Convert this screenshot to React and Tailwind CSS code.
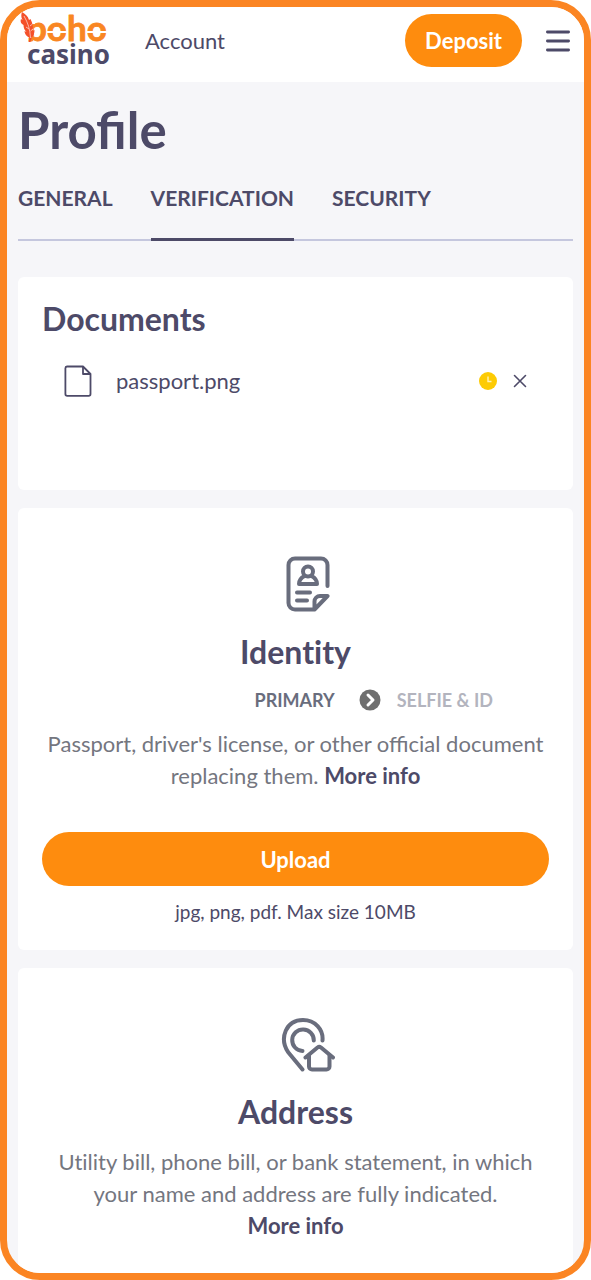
import React from 'react';

const Logo = () => (
  <svg viewBox="0 0 92 58" className="w-[92px] h-[58px] overflow-visible" role="img" aria-label="boho casino">
    <text x="6" y="29" fontSize="35" fontWeight="700" fill="#f98622" stroke="#f98622" strokeWidth="0.8" strokeLinejoin="round" fontFamily="Lato, sans-serif">boho</text>
    {/* slits at both sides of the round letters */}
    <g fill="#fff">
      <rect x="2" y="0" width="12" height="12" />
      <rect x="2" y="10" width="9" height="16" />
      <rect x="26" y="19" width="20" height="2" />
      <rect x="66" y="19" width="20" height="2" />
    </g>
    <path d="M1 0c3 2 6 4 7 8l1.500-1c2 4 3 8 2 12l2-1c0 3-1 6-3 8l-1 4h-2l1-4c-3-2-5-4-5-7l2 1c-2-2-3-4-3-7l2 1C0 12-1 10 0 7l1.500 1C0 5 0 3 1 0z" fill="#f4502a" />
    <path d="M3 4c4 7 6 13 6.500 22M9 14l2.500-2M9.500 19l2.500-2M8 17l-3-2" stroke="#fff" strokeWidth="0.6" fill="none" />
    <text x="6" y="52" fontSize="26" fontWeight="700" fill="#4d4a68" fontFamily="'Noto Sans', sans-serif">casino</text>
  </svg>
);

const MenuIcon = () => (
  <svg viewBox="0 0 24 22" className="w-6 h-[22px]" stroke="#4d4a68" strokeWidth="2.8" strokeLinecap="round">
    <path d="M1.4 2h21.2M1.4 11h21.2M1.4 20h21.2" />
  </svg>
);

const FileIcon = () => (
  <svg viewBox="0 0 28 32" className="w-7 h-8" fill="none" stroke="#4d4a68" strokeWidth="1.8" strokeLinejoin="round">
    <path d="M3 1.5h16l7.500 7.500v20a1.800 1.800 0 0 1-1.800 1.800H3.200a1.800 1.800 0 0 1-1.800-1.800V3.200A1.700 1.700 0 0 1 3 1.500z" />
    <path d="M19 1.500V9h7.500" />
  </svg>
);

const ClockIcon = () => (
  <svg viewBox="0 0 18 18" className="w-[18px] h-[18px]" role="img" aria-label="Pending">
    <circle cx="9" cy="9" r="9" fill="#fdcb04" />
    <path d="M9 4.500V9.500h3.500" fill="none" stroke="#fff3b8" strokeWidth="1.4" />
  </svg>
);

const CloseIcon = () => (
  <svg viewBox="0 0 14 14" className="w-[14px] h-[14px]" stroke="#4d4a68" strokeWidth="1.6" strokeLinecap="round">
    <path d="M1.500 1.500l11 11M12.500 1.500l-11 11" />
  </svg>
);

const IdentityIcon = () => (
  <svg viewBox="0 0 44 56" className="ml-6 w-11 h-14" fill="none" stroke="#696d7d" strokeWidth="4" strokeLinecap="round" strokeLinejoin="round">
    <path d="M41.500 30V9a6.500 6.500 0 0 0-6.500-6.500H9A6.500 6.500 0 0 0 2.500 9v38A6.500 6.500 0 0 0 9 53.500h19.500L41.500 40H34a5.500 5.500 0 0 0-5.500 5.500v8" />
    <circle cx="22" cy="15.500" r="5" />
    <path d="M18.500 20c-3 1.500-5.500 4-5.500 8h18c0-4-2.500-6.500-5.500-8" />
    <path d="M11 36.500h13M11 44.500h10" />
  </svg>
);

const AddressIcon = () => (
  <svg viewBox="0 0 54 54" className="ml-6 w-[54px] h-[54px]" fill="none" stroke="#696d7d" strokeWidth="4" strokeLinecap="round" strokeLinejoin="round">
    <path d="M21.500 51.500L7 34C-2 20 5 2 22 2c12 0 20.500 9.500 19.500 20.500" />
    <path d="M21.500 33a10.800 10.800 0 1 1 11.300-10.500" />
    <path d="M24.500 39.500l12-10a3 3 0 0 1 3.500 0l12 10" />
    <path d="M28 37.500v11a3 3 0 0 0 3 3h14.500a3 3 0 0 0 3-3v-11" />
  </svg>
);

const StepIcon = () => (
  <svg viewBox="0 0 22 22" className="w-[22px] h-[22px]">
    <circle cx="11" cy="11" r="10.500" fill="#6f6f6f" />
    <path d="M9 6l5 5-5 5" fill="none" stroke="#fff" strokeWidth="3" strokeLinecap="round" strokeLinejoin="round" />
  </svg>
);

const tabs = ['General', 'Verification', 'Security'];

const Card = ({ className = '', children }) => (
  <section className={`rounded-md bg-white px-6 ${className}`}>{children}</section>
);

const App = () => (
  <div className="flex min-h-screen flex-col overflow-hidden rounded-[40px] border-[7px] border-[#fb8523] bg-[#f6f6f9] font-['Lato',sans-serif] text-[#4d4a68]">
    <header className="flex h-[75px] items-center bg-white pb-2 pl-[14px] pr-[14px]">
      <a href="#home" className="shrink-0"><Logo /></a>
      <a href="#account" className="ml-8 text-[22px] leading-8">Account</a>
      <button type="button" className="ml-auto h-[53px] rounded-full bg-[#fe8c0e] px-5 text-[22px] font-bold text-white">Deposit</button>
      <button type="button" aria-label="Menu" className="ml-6"><MenuIcon /></button>
    </header>

    <main className="flex grow flex-col px-[11px]">
      <h1 className="mt-5 text-[51px] font-bold leading-[56px]">Profile</h1>

      <nav className="mt-6 flex gap-[38px] border-b-2 border-[#c5c7de]">
        {tabs.map((tab) => (
          <a
            key={tab}
            href={`#${tab.toLowerCase()}`}
            className={`-mb-[2px] border-b-[3px] pb-6 text-[21px] font-bold uppercase leading-8 ${tab === 'Verification' ? 'border-[#4d4a68]' : 'border-transparent'}`}
          >
            {tab}
          </a>
        ))}
      </nav>

      <Card className="mt-9 h-[213px] pt-[22px]">
        <h2 className="text-[32px] font-bold leading-10">Documents</h2>
        <div className="mt-[26px] flex items-center px-[22px]">
          <FileIcon />
          <span className="ml-6 text-[22px] leading-8">passport.png</span>
          <span className="ml-auto"><ClockIcon /></span>
          <button type="button" aria-label="Remove passport.png" className="ml-4"><CloseIcon /></button>
        </div>
      </Card>

      <Card className="mt-[18px] flex flex-col items-center pb-6 pt-12 text-center">
        <IdentityIcon />
        <h2 className="mt-5 text-[32px] font-bold leading-10 [font-variant-ligatures:none]">Identity</h2>
        <div className="mt-3 flex items-center self-end pr-14 text-[18px] font-bold leading-8 text-[#696d7d]">
          <span className="mr-6">PRIMARY</span>
          <StepIcon />
          <span className="ml-4 text-[#b3b4be]">SELFIE &amp; ID</span>
        </div>
        <p className="mt-3 text-[22px] leading-8 text-[#74767f]">
          Passport, driver's license, or other official document replacing them.{' '}
          <a href="#identity-info" className="font-bold text-[#4d4a68]">More info</a>
        </p>
        <button type="button" className="mt-10 h-[54px] w-full rounded-full bg-[#fe8c0e] text-[22px] font-bold text-white">Upload</button>
        <p className="mt-3 text-[19px] leading-7">jpg, png, pdf. Max size 10MB</p>
      </Card>

      <Card className="mt-[18px] flex grow flex-col items-center rounded-b-none pb-6 pt-[50px] text-center">
        <AddressIcon />
        <h2 className="mt-5 text-[32px] font-bold leading-10">Address</h2>
        <p className="mt-[14px] text-[22px] leading-8 text-[#74767f] [font-variant-ligatures:none]">
          Utility bill, phone bill, or bank statement, in which your name and address are fully indicated.{' '}
          <a href="#address-info" className="block font-bold text-[#4d4a68]">More info</a>
        </p>
      </Card>
    </main>
  </div>
);

export default App;
